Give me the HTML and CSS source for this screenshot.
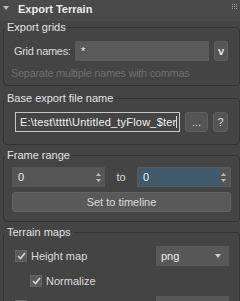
FILE: index.html
```html
<!DOCTYPE html>
<html lang="en">
<head>
  <meta charset="UTF-8" />
  <title>Export Terrain</title>
  <link rel="stylesheet" href="styles.css">
</head>
<body>

<div class="rollout-head">
  <span class="arrow"></span>
  <span class="title">Export Terrain</span>
  <svg class="grip" width="6" height="6" viewBox="0 0 6 6">
    <rect x="0" y="0" width="1" height="1"/><rect x="2" y="0" width="1" height="1"/><rect x="4" y="0" width="1" height="1"/>
    <rect x="0" y="2" width="1" height="1"/><rect x="2" y="2" width="1" height="1"/><rect x="4" y="2" width="1" height="1"/>
    <rect x="0" y="4" width="1" height="1"/><rect x="2" y="4" width="1" height="1"/><rect x="4" y="4" width="1" height="1"/>
  </svg>
</div>

<fieldset class="group g-grids">
  <legend>Export grids</legend>
  <div class="row grid-row">
    <span class="label">Grid names:</span>
    <div class="field">*</div>
    <div class="btn small">v</div>
  </div>
  <div class="hint">Separate multiple names with commas</div>
</fieldset>

<fieldset class="group g-file">
  <legend>Base export file name</legend>
  <div class="row file-row">
    <div class="field file">E:\test\tttt\Untitled_tyFlow_$ter<span class="caret"></span></div>
    <div class="btn dots">...</div>
    <div class="btn q">?</div>
  </div>
</fieldset>

<fieldset class="group g-frames">
  <legend>Frame range</legend>
  <div class="row">
    <div class="spinner">
      <span class="val">0</span>
      <svg class="spin" width="5" height="9" viewBox="0 0 5 9"><path d="M2.5 0 L5 3 L0 3 Z M0 6 L5 6 L2.5 9 Z"/></svg>
    </div>
    <span class="to">to</span>
    <div class="spinner active">
      <span class="val">0</span>
      <svg class="spin" width="5" height="9" viewBox="0 0 5 9"><path d="M2.5 0 L5 3 L0 3 Z M0 6 L5 6 L2.5 9 Z"/></svg>
    </div>
  </div>
  <div class="btn wide">Set to timeline</div>
</fieldset>

<fieldset class="group g-maps">
  <legend>Terrain maps</legend>
  <div class="row map-row">
    <span class="check on"><svg width="9" height="8" viewBox="0 0 9 8"><path d="M1 4 L3.5 6.5 L8 1" /></svg></span>
    <span class="check-label">Height map</span>
    <div class="select">png<span class="drop"></span></div>
  </div>
  <div class="row map-row sub">
    <span class="check on"><svg width="9" height="8" viewBox="0 0 9 8"><path d="M1 4 L3.5 6.5 L8 1" /></svg></span>
    <span class="check-label">Normalize</span>
  </div>
  <div class="row map-row last">
    <span class="check"></span>
    <div class="select"></div>
  </div>
</fieldset>

</body>
</html>
```

FILE: styles.css
```css
body {
  margin: 0;
  width: 240px;
  height: 301px;
  overflow: hidden;
  background-color: #444444;
  font-family: "Liberation Sans", Arial, sans-serif;
  font-size: 11px;
  color: #dcdcdc;
}
.rollout-head {
  height: 21px;
  background-color: #4a4a4a;
  display: flex;
  align-items: flex-start;
  padding-top: 3px;
  box-sizing: border-box;
}
.arrow {
  width: 0;
  height: 0;
  border-left: 3px solid transparent;
  border-right: 3px solid transparent;
  border-top: 4px solid #bdbdbd;
  margin: 3px 0 0 3px;
}
.title {
  font-weight: bold;
  color: #ececec;
  line-height: 13px;
  margin-left: 9px;
  flex: 1;
}
.grip {
  fill: #9a9a9a;
  margin: 1px 2px 0 0;
}
.group {
  border: 1px solid #333333;
  border-radius: 4px;
  margin: 0 0 0 3px;
  padding: 7px 8px 5px 8px;
  min-width: 0;
}
.group legend {
  padding: 0 2px;
  margin-left: -7px;
  line-height: 13px;
  color: #e2e2e2;
}
.g-file {
  margin-top: 6px;
  padding-bottom: 12px;
}
.g-frames {
  margin-top: 4px;
  padding-top: 5px;
  padding-bottom: 9px;
}
.g-maps {
  margin-top: 4px;
}
.row {
  display: flex;
  align-items: center;
  height: 20px;
}
.label {
  padding-left: 2px;
  width: 61px;
  letter-spacing: -0.3px;
}
.field {
  flex: 1;
  height: 20px;
  line-height: 20px;
  background-color: #5a5a5a;
  padding-left: 6px;
  color: #eeeeee;
  box-sizing: border-box;
}
.btn {
  height: 20px;
  line-height: 19px;
  text-align: center;
  background-color: #555555;
  border: 1px solid #5f5f5f;
  border-radius: 3px;
  box-sizing: border-box;
  color: #dcdcdc;
}
.small {
  width: 14px;
  margin: 0 3px 0 5px;
  font-weight: bold;
  color: #dfe8f0;
}
.hint {
  color: #6e6e6e;
  line-height: 13px;
  margin-top: 6px;
  margin-left: -1px;
  letter-spacing: -0.3px;
}
.file-row {
  padding-left: 3px;
}
.file {
  background-color: #444444;
  border: 1px solid #c6c6c6;
  padding-left: 4px;
  line-height: 18px;
  white-space: nowrap;
  overflow: hidden;
  color: #f2f2f2;
  letter-spacing: 0.2px;
}
.caret {
  display: inline-block;
  width: 1px;
  height: 12px;
  background-color: #e0e0e0;
  vertical-align: -2px;
}
.dots {
  width: 23px;
  margin-left: 5px;
}
.q {
  width: 15px;
  margin: 0 3px 0 5px;
}
.spinner {
  width: 93px;
  height: 20px;
  display: flex;
  align-items: center;
  background-color: #555555;
  box-sizing: border-box;
}
.spinner .val {
  flex: 1;
  padding-left: 6px;
  color: #eeeeee;
}
.spin {
  fill: #bcbcbc;
  margin-right: 4px;
}
.spinner.active {
  width: 94px;
  border: 1px solid #5a5a5a;
  background: linear-gradient(to right, #415a6b 0, #415a6b 82px, #555555 82px);
}
.spinner.active .val {
  padding-left: 5px;
}
.to {
  flex: 1;
  text-align: center;
}
.wide {
  margin-top: 5px;
  background-color: #595959;
  border-color: #636363;
}
.map-row {
  height: 20px;
  margin-bottom: 5px;
  padding-left: 3px;
}
.map-row.sub {
  padding-left: 18px;
}
.map-row.last {
  justify-content: space-between;
}
.check {
  width: 12px;
  height: 12px;
  background-color: #5a5a5a;
  border: 1px solid #656565;
  box-sizing: border-box;
  display: flex;
  align-items: center;
  justify-content: center;
}
.check svg {
  fill: none;
  stroke: #d8d8d8;
  stroke-width: 1.6;
}
.check-label {
  margin-left: 4px;
  flex: 1;
}
.select {
  width: 73px;
  height: 20px;
  line-height: 20px;
  background-color: #585858;
  padding-left: 5px;
  box-sizing: border-box;
  margin-right: 2px;
  position: relative;
  color: #eeeeee;
}
.drop {
  position: absolute;
  right: 8px;
  top: 8px;
  width: 0;
  height: 0;
  border-left: 3px solid transparent;
  border-right: 3px solid transparent;
  border-top: 4px solid #d0d0d0;
}
```
